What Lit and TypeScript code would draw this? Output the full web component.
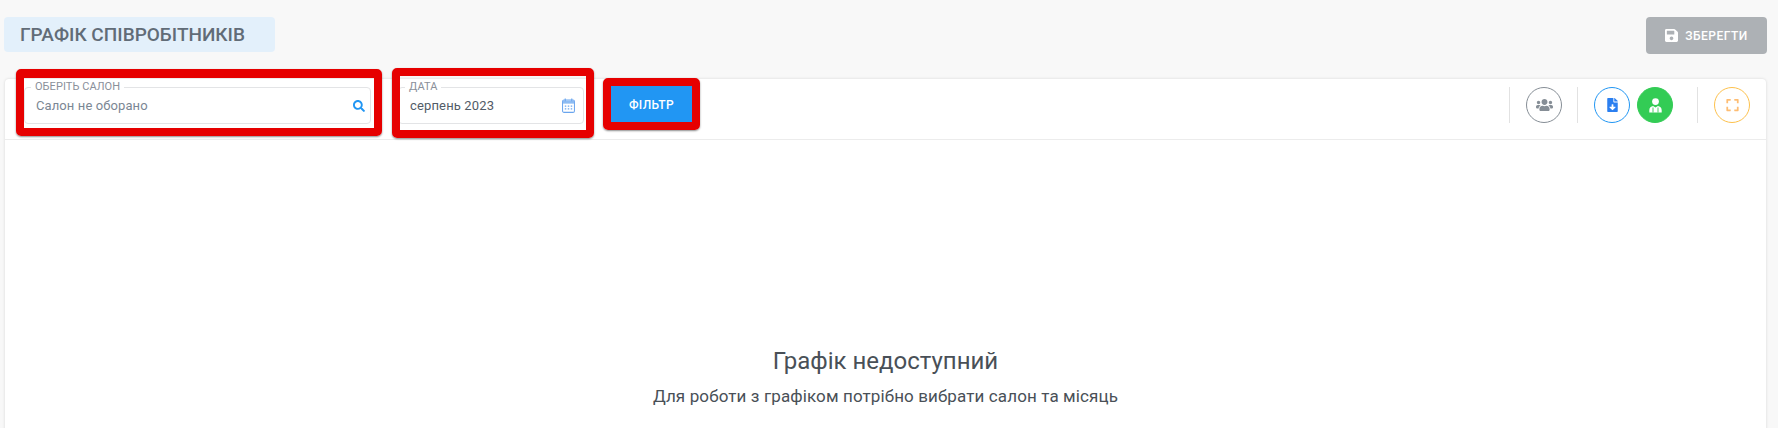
import { LitElement, html, css } from "lit";
import { customElement } from "lit/decorators.js";

const ic = (vb: string, d: string, cls: string) =>
  html`<svg class=${cls} viewBox=${vb} fill="currentColor" aria-hidden="true"><path d=${d}></path></svg>`;

const SAVE = "M433.941 129.941l-83.882-83.882A48 48 0 0 0 316.118 32H48C21.49 32 0 53.49 0 80v352c0 26.51 21.49 48 48 48h352c26.51 0 48-21.49 48-48V163.882a48 48 0 0 0-14.059-33.941zM224 416c-35.346 0-64-28.654-64-64 0-35.346 28.654-64 64-64s64 28.654 64 64c0 35.346-28.654 64-64 64zm96-304.52V212c0 6.627-5.373 12-12 12H76c-6.627 0-12-5.373-12-12V108c0-6.627 5.373-12 12-12h228.52c3.183 0 6.235 1.264 8.485 3.515l3.48 3.48A11.996 11.996 0 0 1 320 111.48z";
const SEARCH = "M505 442.7L405.3 343c-4.5-4.5-10.6-7-17-7H372c27.6-35.3 44-79.7 44-128C416 93.1 322.9 0 208 0S0 93.1 0 208s93.1 208 208 208c48.3 0 92.7-16.4 128-44v16.3c0 6.4 2.5 12.5 7 17l99.7 99.7c9.4 9.4 24.6 9.4 33.9 0l28.3-28.3c9.4-9.4 9.4-24.6.1-34zM208 336c-70.7 0-128-57.2-128-128 0-70.7 57.2-128 128-128 70.7 0 128 57.2 128 128 0 70.7-57.2 128-128 128z";
const USERS = "M96 224c35.3 0 64-28.7 64-64s-28.7-64-64-64-64 28.7-64 64 28.7 64 64 64zm448 0c35.3 0 64-28.7 64-64s-28.7-64-64-64-64 28.7-64 64 28.7 64 64 64zm32 32h-64c-17.6 0-33.5 7.1-45.1 18.6 40.3 22.1 68.9 62 75.1 109.4h66c17.7 0 32-14.3 32-32v-32c0-35.3-28.7-64-64-64zm-256 0c61.9 0 112-50.1 112-112S381.9 32 320 32 208 82.1 208 144s50.1 112 112 112zm76.8 32h-8.3c-20.8 10-43.9 16-68.5 16s-47.6-6-68.5-16h-8.3C179.6 288 128 339.6 128 403.2V432c0 26.5 21.5 48 48 48h288c26.5 0 48-21.5 48-48v-28.8c0-63.6-51.6-115.2-115.2-115.2zm-223.7-13.4C161.5 263.1 145.6 256 128 256H64c-35.3 0-64 28.7-64 64v32c0 17.7 14.3 32 32 32h65.9c6.3-47.4 34.9-87.3 75.2-109.4z";
const FILE_DL = "M224 136V0H24C10.7 0 0 10.7 0 24v464c0 13.3 10.7 24 24 24h336c13.3 0 24-10.7 24-24V160H248c-13.2 0-24-10.8-24-24zm76.45 211.36l-96.42 95.7c-6.65 6.61-17.39 6.61-24.04 0l-96.42-95.7C73.42 337.29 80.54 320 94.82 320H160v-80c0-8.84 7.16-16 16-16h32c8.84 0 16 7.16 16 16v80h65.18c14.28 0 21.4 17.29 11.27 27.36zM377 105L279.1 7c-4.5-4.5-10.6-7-17-7H256v128h128v-6.1c0-6.3-2.5-12.4-7-16.9z";
const EXPAND = "M0 180V56c0-13.3 10.7-24 24-24h124c6.6 0 12 5.4 12 12v40c0 6.6-5.4 12-12 12H64v84c0 6.6-5.4 12-12 12H12c-6.6 0-12-5.4-12-12zm288-136v40c0 6.6 5.4 12 12 12h84v84c0 6.6 5.4 12 12 12h40c6.6 0 12-5.4 12-12V56c0-13.3-10.7-24-24-24H300c-6.6 0-12 5.4-12 12zm148 276h-40c-6.6 0-12 5.4-12 12v84h-84c-6.6 0-12 5.4-12 12v40c0 6.6 5.4 12 12 12h124c13.3 0 24-10.7 24-24V332c0-6.6-5.4-12-12-12zM160 468v-40c0-6.6-5.4-12-12-12H64v-84c0-6.6-5.4-12-12-12H12c-6.6 0-12 5.4-12 12v124c0 13.3 10.7 24 24 24h124c6.6 0 12-5.4 12-12z";

@customElement("app-root")
export class AppRoot extends LitElement {
  static styles = css`
    :host {
      display: block;
      height: 428px;
      overflow: hidden;
      background: #f8f8f8;
      font-family: Roboto, "Noto Sans", sans-serif;
      color: #495057;
    }
    .top {
      display: flex;
      justify-content: space-between;
      align-items: flex-start;
      padding: 17px 11px 0 4px;
      height: 79px;
      box-sizing: border-box;
    }
    .title {
      width: 271px;
      height: 35px;
      box-sizing: border-box;
      padding-left: 16px;
      background: #e3f0fb;
      border-radius: 4px;
      font-size: 19px;
      font-weight: 500;
      line-height: 35px;
      color: #616c77;
      white-space: nowrap;
    }
    .save {
      width: 121px;
      height: 37px;
      display: flex;
      align-items: center;
      justify-content: center;
      gap: 7px;
      background: #adb1b5;
      border-radius: 4px;
      color: #fff;
      font-size: 12px;
      font-weight: 500;
      letter-spacing: 0.5px;
    }
    .save-ic { width: 13px; height: 15px; }
    .card {
      margin: 0 12px 0 5px;
      height: 420px;
      background: #fff;
      border-radius: 4px;
      box-shadow: 0 0 3px rgba(0, 0, 0, 0.14);
    }
    .head {
      display: flex;
      align-items: flex-start;
      height: 61px;
      box-sizing: border-box;
      padding: 7px 16px 0 19px;
      border-bottom: 1px solid #ececec;
    }
    .field {
      position: relative;
      box-sizing: border-box;
      margin-top: 1px;
      height: 37px;
      border: 1px solid #e3e4e6;
      border-radius: 4px;
      display: flex;
      align-items: center;
      justify-content: space-between;
      font-size: 13px;
    }
    .salon { width: 347px; padding: 0 5px 0 11px; color: #7b8794; letter-spacing: 0.1px; }
    .date { width: 186px; margin-left: 27px; padding: 0 8px 0 11px; color: #525c67; letter-spacing: 0.15px; }
    .legend {
      position: absolute;
      top: -8px;
      left: 6px;
      padding: 0 4px;
      background: #fff;
      font-size: 11px;
      line-height: 13px;
      color: #8a909a;
      letter-spacing: 0.05px;
    }
    .search { width: 12px; height: 12px; color: #2196f3; }
    .cal { width: 13px; height: 15px; }
    .btn {
      position: relative;
      margin-left: 27px;
      width: 81px;
      height: 36px;
      box-sizing: border-box;
      padding-top: 2px;
      background: #2196f3;
      color: #fff;
      font-size: 12px;
      font-weight: 500;
      letter-spacing: 0.4px;
      display: flex;
      align-items: center;
      justify-content: center;
    }
    .mark {
      position: absolute;
      box-sizing: border-box;
      border: 8px solid #e60000;
      border-radius: 5px;
      box-shadow: 0 1px 2px rgba(0, 0, 0, 0.45);
      pointer-events: none;
    }
    .salon .mark { inset: -19px -12px -13px -9px; border-top-width: 9px; }
    .date .mark { inset: -20px -11px -15px -7px; }
    .btn .mark { inset: -8px; }
    .tools {
      margin-left: auto;
      display: flex;
      align-items: center;
      margin-top: 1px;
    }
    .sep { width: 1px; height: 36px; background: #e2e2e2; }
    .circle {
      box-sizing: border-box;
      width: 36px;
      height: 36px;
      border-radius: 50%;
      border: 1px solid;
      display: flex;
      align-items: center;
      justify-content: center;
    }
    .c-gray { border-color: #868e96; color: #868e96; margin: 0 15px 0 16px; }
    .c-blue { border-color: #2196f3; color: #2b7ff0; margin: 0 7px 0 16px; }
    .c-green { background: #33cc55; border-color: #33cc55; color: #fff; margin-right: 24px; }
    .c-orange { border-color: #fdc14c; color: #fdbd73; margin-left: 16px; }
    .users { width: 17px; height: 14px; }
    .file { width: 11px; height: 14px; }
    .md { width: 13px; height: 15px; }
    .exp { width: 13px; height: 14px; }
    .body {
      height: 359px;
      box-sizing: border-box;
      padding-top: 205px;
      text-align: center;
    }
    .h {
      font-size: 24px;
      line-height: 32px;
      color: #495057;
    }
    .p {
      margin-top: 7px;
      font-size: 17px;
      line-height: 24px;
      letter-spacing: 0.12px;
      color: #495057;
    }
  `;

  render() {
    return html`
      <div class="top">
        <div class="title">ГРАФІК СПІВРОБІТНИКІВ</div>
        <div class="save">${ic("0 0 448 512", SAVE, "save-ic")}<span>ЗБЕРЕГТИ</span></div>
      </div>
      <div class="card">
        <div class="head">
          <div class="field salon">
            <span class="legend">ОБЕРІТЬ САЛОН</span>
            <span>Салон не оборано</span>
            ${ic("0 0 512 512", SEARCH, "search")}
            <div class="mark"></div>
          </div>
          <div class="field date">
            <span class="legend">ДАТА</span>
            <span>серпень 2023</span>
            <svg class="cal" viewBox="0 0 14 16" aria-hidden="true">
              <rect x="0.6" y="2" width="12.8" height="13.4" rx="1.6" fill="none" stroke="#6aa5ee" stroke-width="1.1"></rect>
              <path d="M1 2.6h12V6H1z" fill="#8dbcf3"></path>
              <path d="M3.5 0.5v3M10.5 0.5v3" stroke="#6aa5ee" stroke-width="1.2"></path>
              <path d="M3 8h1.6v1.4H3zM6.2 8h1.6v1.4H6.2zM9.4 8H11v1.4H9.4zM3 11h1.6v1.4H3zM6.2 11h1.6v1.4H6.2zM9.4 11H11v1.4H9.4z" fill="#6aa5ee"></path>
            </svg>
            <div class="mark"></div>
          </div>
          <div class="btn">ФІЛЬТР<div class="mark"></div></div>
          <div class="tools">
            <div class="sep"></div>
            <div class="circle c-gray">${ic("0 0 640 512", USERS, "users")}</div>
            <div class="sep"></div>
            <div class="circle c-blue">${ic("0 0 384 512", FILE_DL, "file")}</div>
            <div class="circle c-green">
              <svg class="md" viewBox="0 0 13 15" aria-hidden="true">
                <circle cx="6.5" cy="3.6" r="3.4" fill="#fff"></circle>
                <path d="M0.3 14.6v-2.4c0-2.3 1.7-4 3.8-4.2l2.4 1.6 2.4-1.6c2.1.2 3.8 1.9 3.8 4.2v2.4z" fill="#fff"></path>
                <path d="M4 9.5v5M9 9.5v5" stroke="#33cc55" stroke-width="0.9"></path>
              </svg>
            </div>
            <div class="sep"></div>
            <div class="circle c-orange">${ic("0 0 448 512", EXPAND, "exp")}</div>
          </div>
        </div>
        <div class="body">
          <div class="h">Графік недоступний</div>
          <div class="p">Для роботи з графіком потрібно вибрати салон та місяць</div>
        </div>
      </div>
    `;
  }
}
